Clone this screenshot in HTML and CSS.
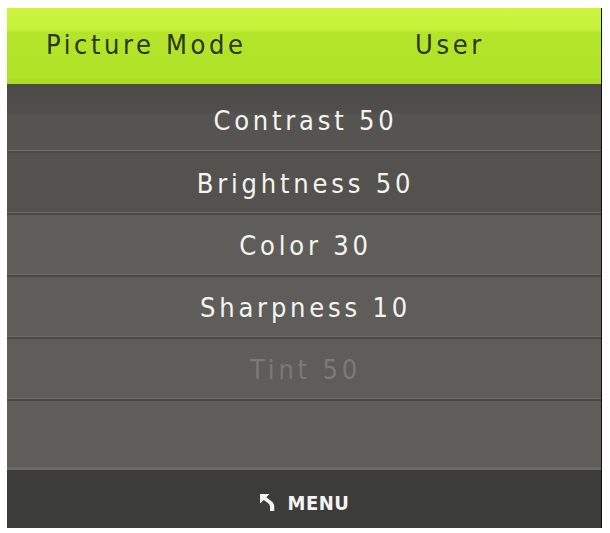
FILE: index.html
```html
<!DOCTYPE html>
<html>
<head>
<meta charset="utf-8">
<link rel="stylesheet" href="styles.css">
</head>
<body>
<div class="panel">
  <div class="header">
    <span class="title">Picture Mode</span>
    <span class="value">User</span>
  </div>
  <div class="list">
    <div class="row first">Contrast 50</div>
    <div class="row dark">Brightness 50</div>
    <div class="row">Color 30</div>
    <div class="row">Sharpness 10</div>
    <div class="row disabled">Tint 50</div>
    <div class="row empty"></div>
  </div>
  <div class="footer">
    <svg class="back" width="21" height="19" viewBox="0 0 20 18">
      <path d="M1 1 L10 1 L7 4 L11 7 Q14.5 9.5 14.5 12.5 L14.5 17 L10.5 17 L10.5 13 Q10.5 10.8 8.2 9.2 L4.5 6.5 L1 10 Z" fill="#f4f4f4"/>
    </svg>
    <span class="menu">MENU</span>
  </div>
</div>
</body>
</html>
```
FILE: styles.css
```css
html, body {
  margin: 0;
  padding: 0;
  background: #ffffff;
}
body {
  padding: 8px 0 0 7px;
  font-family: "DejaVu Sans Condensed", "DejaVu Sans", "Liberation Sans", sans-serif;
}
.panel {
  width: 594px;
  border-right: 1px solid #101010;
  display: flex;
  flex-direction: column;
}
.header {
  height: 76px;
  background: linear-gradient(to bottom, #cdf53f 0px, #c6f23a 22px, #b4e52b 24px, #b0e228 70px, #a9d826 76px);
  display: flex;
  align-items: center;
  padding: 0 0 4px 39px;
  box-sizing: border-box;
  color: #2c3612;
  font-size: 27px;
  letter-spacing: 3.6px;
}
.title {
  width: 369px;
}
.list {
  display: flex;
  flex-direction: column;
}
.row {
  height: 62px;
  display: flex;
  align-items: center;
  justify-content: center;
  background: #5e5d59;
  color: #f4f4f0;
  font-size: 27px;
  letter-spacing: 3.8px;
  padding-left: 3px;
  border-bottom: 2px solid #4a4946;
  box-shadow: inset 0 -1px 0 #6e6d69;
  box-sizing: border-box;
}
.row.first {
  height: 69px;
  padding-top: 6px;
  background: linear-gradient(to bottom, #4c4b49 0px, #4f4e4b 28px, #555451 30px, #555451 69px);
}
.row.dark {
  background: #53524e;
}
.row.disabled {
  color: #7b7a75;
}
.row.empty {
  height: 69px;
  border-bottom: none;
  box-shadow: inset 0 -3px 0 #6a6965;
}
.footer {
  height: 58px;
  background: #3c3c3a;
  display: flex;
  align-items: center;
  justify-content: center;
  gap: 8px;
  padding: 7px 0 0 0;
  box-sizing: border-box;
}
.back {
  display: block;
}
.menu {
  color: #f4f4f4;
  font-weight: bold;
  font-size: 20px;
  letter-spacing: 0.5px;
}
```
